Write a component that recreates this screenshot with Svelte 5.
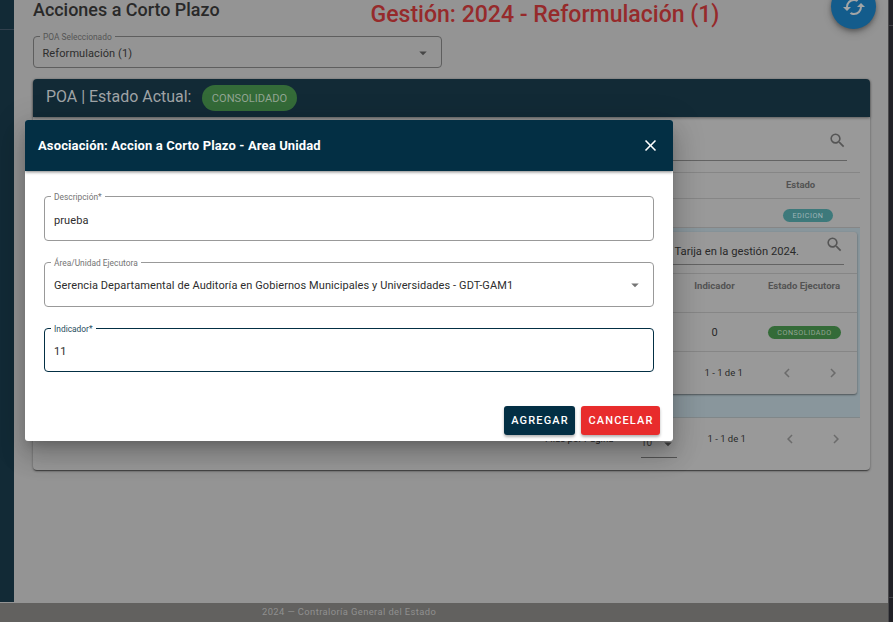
<script>
  const pager = '1 - 1 de 1';
  const fields = [
    { label: 'Descripción*', value: 'prueba' },
    { label: 'Área/Unidad Ejecutora', value: 'Gerencia Departamental de Auditoría en Gobiernos Municipales y Universidades - GDT-GAM1', select: true },
    { label: 'Indicador*', value: '11', focused: true }
  ];
</script>

{#snippet search()}
  <svg class="search" viewBox="0 0 24 24"><path d="M9.5,3A6.5,6.5 0 0,1 16,9.5C16,11.11 15.41,12.59 14.44,13.73L14.71,14H15.5L20.5,19L19,20.5L14,15.5V14.71L13.73,14.44C12.59,15.41 11.11,16 9.5,16A6.5,6.5 0 0,1 3,9.5A6.5,6.5 0 0,1 9.5,3M9.5,5C7,5 5,7 5,9.5C5,12 7,14 9.5,14C12,14 14,12 14,9.5C14,7 12,5 9.5,5Z" /></svg>
{/snippet}
{#snippet caret()}
  <svg class="caret" viewBox="0 0 24 24"><path d="M7,10L12,15L17,10H7Z" /></svg>
{/snippet}
{#snippet chevrons()}
  <svg class="chev" viewBox="0 0 24 24"><path d="M15.41,16.58L10.83,12L15.41,7.41L14,6L8,12L14,18L15.41,16.58Z" /></svg>
  <svg class="chev" viewBox="0 0 24 24"><path d="M8.59,16.58L13.17,12L8.59,7.41L10,6L16,12L10,18L8.59,16.58Z" /></svg>
{/snippet}

<div class="app">
  <div class="row">
    <div class="page">
      <div class="content">
        <aside></aside>
        <main>
          <div class="heading">
            <h1>Acciones a Corto Plazo</h1>
            <h2>Gestión: 2024 - Reformulación (1)</h2>
            <button class="fab" aria-label="Actualizar">
              <svg viewBox="0 0 24 24"><path d="M19,8L15,12H18A6,6 0 0,1 12,18C11,18 10.03,17.75 9.2,17.3L7.74,18.76C8.97,19.54 10.43,20 12,20A8,8 0 0,0 20,12H23M6,12A6,6 0 0,1 12,6C13,6 13.97,6.25 14.8,6.7L16.26,5.24C15.03,4.46 13.57,4 12,4A8,8 0 0,0 4,12H1L5,16L9,12" /></svg>
            </button>
          </div>
          <fieldset class="field poa">
            <legend>POA Seleccionado</legend>
            <div class="value"><span>Reformulación (1)</span>{@render caret()}</div>
          </fieldset>
          <section class="card">
            <header><span class="state">POA | Estado Actual:</span><span class="chip">CONSOLIDADO</span></header>
            <div class="body">
              <div class="filter">{@render search()}</div>
              <div class="tr head"><b>Estado</b></div>
              <div class="tr item"><span class="pill cyan">EDICION</span></div>
              <div class="expanded">
                <div class="inner">
                  <div class="filter inner-filter"><span>Tarija en la gestión 2024.</span>{@render search()}</div>
                  <div class="tr inner-head"><b class="c1">Indicador</b><b class="c2">Estado Ejecutora</b></div>
                  <div class="tr inner-item"><span class="c1">0</span><span class="c2"><i class="pill green">CONSOLIDADO</i></span></div>
                  <div class="pager"><span class="size"></span><span class="range">{pager}</span>{@render chevrons()}</div>
                </div>
              </div>
              <div class="pager outer"><span class="rows">Filas por Página</span><span class="size"><span>10</span>{@render caret()}</span><span class="range">{pager}</span>{@render chevrons()}</div>
            </div>
          </section>
        </main>
      </div>
      <footer>2024 — Contraloría General del Estado</footer>
    </div>
    <div class="edge"><div></div></div>
  </div>

  <div class="dialog" role="dialog">
    <div class="bar">
      <strong>Asociación: Accion a Corto Plazo - Area Unidad</strong>
      <svg viewBox="0 0 24 24"><path d="M19,6.41L17.59,5L12,10.59L6.41,5L5,6.41L10.59,12L5,17.59L6.41,19L12,13.41L17.59,19L19,17.59L13.41,12L19,6.41Z" /></svg>
    </div>
    <div class="form">
      {#each fields as f}
        <fieldset class="field" class:focused={f.focused}>
          <legend>{f.label}</legend>
          <div class="value"><span>{f.value}</span>{#if f.select}{@render caret()}{/if}</div>
        </fieldset>
      {/each}
    </div>
    <div class="actions"><button class="add">AGREGAR</button><button class="cancel">CANCELAR</button></div>
  </div>
</div>

<style>
  :global(body) { margin: 0; overflow: hidden; }
  .app { position: relative; width: 893px; height: 622px; overflow: hidden; font-family: Roboto, sans-serif; font-size: 11px; color: #2d2d2d; white-space: nowrap; }
  .app * { box-sizing: border-box; }
  svg { display: block; fill: currentColor; flex: none; }
  .row { display: flex; height: 622px; }
  .page { width: 888px; background: #949494; }
  .content { display: flex; height: 603px; }
  aside { width: 14px; height: 602px; background: linear-gradient(#31404d, #31404d) 0 29px / 14px 1px no-repeat #122a36; }
  main { width: 874px; padding: 0 18px 0 19px; }
  footer { height: 19px; background: #62615f; color: #90908f; padding-left: 262px; font-size: 9.4px; line-height: 18px; letter-spacing: .4px; }
  .edge { width: 5px; background: #222227; border-left: 1px solid #4a4a4c; padding-top: 25px; }
  .edge div { height: 573px; border-top: 1px solid #414146; border-bottom: 1px solid #414146; }

  .heading { display: flex; height: 36px; position: relative; }
  h1 { margin: 0; width: 337.5px; font-size: 17.95px; line-height: 19px; font-weight: 500; color: #292929; }
  h2 { margin: 0; font-size: 23.05px; line-height: 30px; font-weight: 500; color: #962a2b; }
  .fab { position: absolute; left: 798px; top: -16px; width: 45px; height: 45px; border: 0; border-radius: 50%; padding: 0; display: grid; place-items: center; background: #135c8c; color: #a2a5a6; box-shadow: 0 2px 4px rgba(0,0,0,.3), 0 4px 8px rgba(0,0,0,.18); }
  .fab svg { width: 24px; height: 24px; }

  .field { margin: 0; min-width: 0; padding: 0 9px 0 6px; border: 1px solid #999; border-radius: 4px; height: 49px; display: block; }
  .field legend { height: 9px; line-height: 11px; padding: 0 3px; font-size: 8.4px; color: #747474; }
  .value { display: flex; align-items: center; justify-content: space-between; padding-left: 3px; height: 38px; font-size: 11px; letter-spacing: .09px; }
  .field + .field .value { height: 36px; }
  .caret { width: 18px; height: 18px; color: #757575; }
  .poa { width: 409px; height: 36px; margin-top: -4px; border-color: #5e5e5e; }
  .poa legend { color: #555; }
  .poa .value { height: 25px; }
  .poa .value span { margin-left: -.5px; }
  .poa .caret { color: #474747; margin-top: -2px; }

  .card { margin-top: 11px; width: 837px; height: 391px; border-radius: 4px; background: #999; box-shadow: 0 2px 1px -1px rgba(0,0,0,.35), 0 1px 2px rgba(0,0,0,.35), 0 1px 3px rgba(0,0,0,.12); }
  .card header { height: 38px; border-radius: 4px 4px 0 0; display: flex; align-items: center; padding-left: 13px; background: #122a36; box-shadow: 0 1px 3px rgba(0,0,0,.4); }
  .state { width: 156px; font-size: 15.95px; line-height: 36px; height: 38px; color: #a0a4a6; }
  .chip { width: 95px; height: 26px; border-radius: 13px; background: #346b38; color: #93a694; font-size: 11.1px; line-height: 27px; text-align: center; }
  .body { padding: 0 10px; }
  .filter { height: 44px; width: 804px; border-bottom: 1px solid #636363; display: flex; justify-content: flex-end; padding-top: 14px; }
  .search { width: 19px; height: 19px; color: #555; }
  .tr { display: flex; color: #535353; border-bottom: 1px solid #868686; }
  .head { margin-top: 11px; height: 27px; border-top: 1px solid #868686; padding: 0 0 2px 743px; align-items: center; font-size: 9.5px; }
  .item { height: 29px; padding: 10px 0 0 740px; }
  .pill { display: block; height: 13px; border-radius: 7px; font-style: normal; text-align: center; line-height: 14px; letter-spacing: .5px; }
  .cyan { width: 50px; background: #3d797b; color: #9fb5b7; font-size: 7.2px; }
  .green { width: 73px; background: #346b38; color: #93a694; font-size: 7.2px; }
  .expanded { height: 190px; background: #89969c; padding: 4px 3px 0 3px; border-bottom: 1px solid #808789; }
  .inner { height: 162px; background: #999; border-radius: 3px; box-shadow: 0 1px 2px rgba(0,0,0,.45); }
  .inner-filter { height: 33px; width: 798px; padding-top: 3px; color: #292929; }
  .inner-filter span { line-height: 33px; margin-right: 26px; font-size: 11.2px; }
  .inner-head { margin-top: 8px; height: 40px; border-top: 1px solid #868686; padding-top: 6px; font-size: 9.55px; }
  .inner-item { height: 39px; align-items: center; color: #292929; }
  .c1 { width: 73px; margin-left: 632px; text-align: center; }
  .c2 { margin-left: 17px; }
  .pager { height: 41px; display: flex; align-items: center; font-size: 9.5px; color: #292929; }
  .pager .size { width: 36px; margin-left: 591px; height: 18px; margin-top: 18px; border-bottom: 1px solid #555; }
  .pager .range { width: 73px; margin-left: 31.5px; }
  .chev { width: 18px; height: 18px; color: #6b6b6b; }
  .chev + .chev { margin-left: 28px; }
  .outer .rows { width: 96px; margin-left: 502px; font-size: 9.6px; }
  .outer .size { display: flex; margin: 12px 0 0; height: 26px; color: #3a3a3a; align-items: flex-start; padding-top: 5px; font-size: 10px; }
  .outer .size .caret { margin: -2px 0 0 7px; color: #404040; }
  .outer .range { margin-left: 30.5px; }

  .dialog { position: absolute; left: 25px; top: 120px; width: 648px; height: 321px; border-radius: 3px; overflow: hidden; background: #fff; }
  .dialog { box-shadow: 0 7px 10px -4px rgba(0,0,0,.2), 0 16px 25px 2px rgba(0,0,0,.14), 0 6px 31px 5px rgba(0,0,0,.12); }
  .bar { height: 51px; background: #032f44; color: #fff; display: flex; align-items: center; justify-content: space-between; padding: 0 13px; box-shadow: 0 1px 3px rgba(0,0,0,.5); }
  .bar strong { font-size: 13px; font-weight: 700; letter-spacing: .13px; }
  .bar svg { width: 19px; height: 19px; }
  .form { height: 229px; padding: 21px 19px 0; display: flex; flex-direction: column; gap: 17px; }
  .focused { border-color: #032f44; height: 48px; }
  .focused legend { color: #284d5e; }
  .actions { display: flex; gap: 6px; justify-content: flex-end; padding: 6px 13px 0; }
  .actions button { border: 0; border-radius: 3px; padding: 0 0 0 1px; height: 29px; color: #fff; font: 500 11px Roboto, sans-serif; letter-spacing: 1.15px; box-shadow: 0 2px 3px rgba(0,0,0,.3); }
  .actions .add { width: 71px; background: #032f44; }
  .actions .cancel { width: 79px; background: #e82c2c; }
</style>
